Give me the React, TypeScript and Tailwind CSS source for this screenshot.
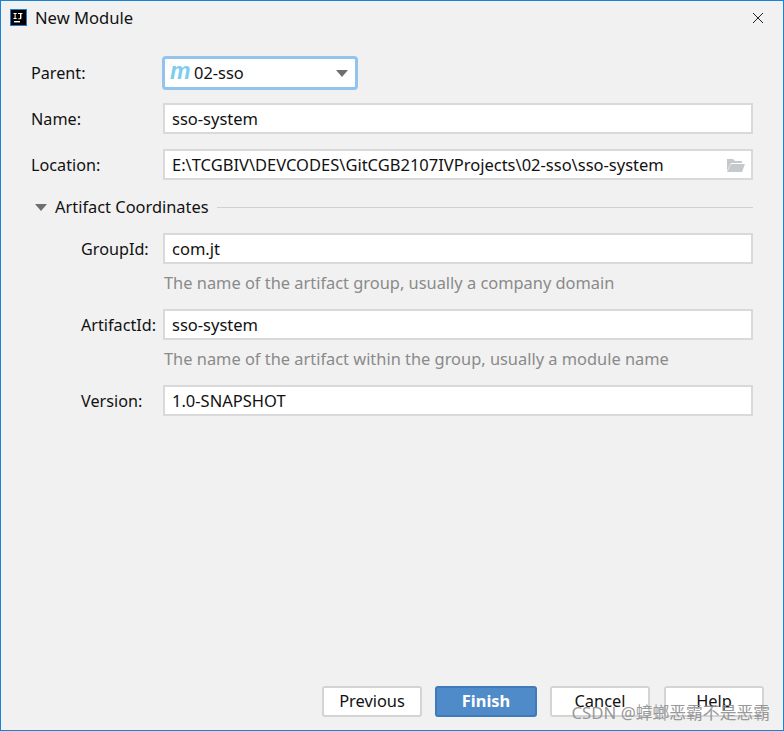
import React from "react";

const font = { fontFamily: '"Noto Sans", "Noto Sans CJK SC", sans-serif' };

function Field({ value, className = "", children }: { value: string; className?: string; children?: React.ReactNode }) {
  return (
    <div className={"flex h-[31px] flex-1 items-center justify-between border-2 border-[#d9d9d9] bg-white pl-[7px] pr-[5px] pt-[1px] text-[16.5px] text-[#111] " + className}>
      <span>{value}</span>
      {children}
    </div>
  );
}

function Row({ label, labelClass, children, className = "" }: { label: string; labelClass: string; children: React.ReactNode; className?: string }) {
  return (
    <div className={"flex items-center " + className}>
      <div className={"shrink-0 pt-[1px] text-[16.2px] text-[#111] " + labelClass}>{label}</div>
      {children}
    </div>
  );
}

function Btn({ children, primary, className = "" }: { children: React.ReactNode; primary?: boolean; className?: string }) {
  return (
    <div
      className={
        "flex h-[31px] items-center justify-center rounded-[3px] border-2 pb-[1px] text-[16.4px] " +
        (primary
          ? "border-[#4279b8] bg-[#4f8bc9] font-bold text-white "
          : "border-[#d4d4d4] bg-white text-[#111] ") +
        className
      }
    >
      {children}
    </div>
  );
}

export default function App() {
  return (
    <div style={font} className="relative flex h-[731px] w-[784px] flex-col overflow-hidden border border-[#1883d7] bg-[#f1f1f1]">
      <div className="flex h-[34px] shrink-0 items-center pl-[9px] pr-[19px]">
        <svg width="18" height="18" viewBox="0 0 18 18" className="shrink-0">
          <rect x="0.5" y="0.5" width="16" height="16" fill="#000" stroke="#1f78d1" />
          <rect x="4" y="12" width="6" height="1.4" fill="#fff" />
          <path d="M3.5 4h3.2v1H5.600v4h1.100v1H3.500V9h1.100V5H3.500zM8 4h4.400v1h-1v4.200c0 .6-.6 1-1.300 1H8.400V9.200h1.600V5H8z" fill="#fff" />
        </svg>
        <span className="ml-[7px] text-[16.6px] text-[#111]">New Module</span>
        <svg width="12" height="12" viewBox="0 0 12 12" className="ml-auto" fill="none" stroke="#222" strokeWidth="1">
          <path d="M1 1l10 10M11 1L1 11" />
        </svg>
      </div>

      <div className="flex flex-col pl-[30px] pr-[30px] pt-[21px]">
        <Row label="Parent:" labelClass="w-[131px]">
          <div className="flex h-[34px] w-[196px] items-center justify-between rounded-[4px] border-[3px] border-[#92c4ee] bg-white pl-[5px] pr-[7px] text-[16.4px] text-[#111]">
            <span className="flex items-center">
              <span className="mb-[3px] mr-[5px] w-[19px] text-[23px] font-bold italic leading-none text-[#7dcdec]" style={{ fontFamily: '"Liberation Sans", sans-serif' }}>m</span>
              02-sso
            </span>
            <svg width="12" height="7" viewBox="0 0 12 7"><path d="M0 0h12L6 7z" fill="#6e6e6e" /></svg>
          </div>
        </Row>
        <Row label="Name:" labelClass="w-[132px]" className="mt-[13px]">
          <Field value="sso-system" />
        </Row>
        <Row label="Location:" labelClass="w-[132px]" className="mt-[15px]">
          <Field value="E:\TCGBIV\DEVCODES\GitCGB2107IVProjects\02-sso\sso-system">
            <svg width="20" height="15" viewBox="0 0 20 15">
              <path d="M1 1h6l2 2h7v2H5L1 13z" fill="#c4c9cc" />
              <path d="M5 6h14l-3 8H1z" fill="#c4c9cc" />
            </svg>
          </Field>
        </Row>

        <div className="mt-[15px] flex h-[24px] items-center">
          <svg width="12" height="7" viewBox="0 0 12 7" className="ml-[4px] shrink-0"><path d="M0 0h12L6 7z" fill="#6e6e6e" /></svg>
          <span className="ml-[8px] text-[16.4px] leading-[24px] text-[#111]">Artifact Coordinates</span>
          <div className="ml-[8px] h-px flex-1 bg-[#d1d1d1]" />
        </div>

        <div className="flex flex-col pl-[50px]">
          <Row label="GroupId:" labelClass="w-[82px]" className="mt-[14px]">
            <Field value="com.jt" />
          </Row>
          <div className="ml-[83px] mt-[4px] text-[16.4px] leading-[30px] text-[#8a8a8a]">The name of the artifact group, usually a company domain</div>
          <Row label="ArtifactId:" labelClass="w-[82px]" className="mt-[11px]">
            <Field value="sso-system" />
          </Row>
          <div className="ml-[83px] mt-[4px] text-[16.4px] leading-[30px] text-[#8a8a8a]">The name of the artifact within the group, usually a module name</div>
          <Row label="Version:" labelClass="w-[82px]" className="mt-[11px]">
            <Field value="1.0-SNAPSHOT" />
          </Row>
        </div>
      </div>

      <div className="mt-auto mb-[13px] flex justify-end pr-[19px]">
        <Btn className="w-[100px]">Previous</Btn>
        <Btn primary className="ml-[13px] w-[102px]">Finish</Btn>
        <Btn className="ml-[13px] w-[100px]">Cancel</Btn>
        <Btn className="ml-[14px] w-[100px]">Help</Btn>
      </div>

      <div className="absolute bottom-[6px] right-[13px] text-[16.8px] leading-[22px] text-[#8f8f8f] opacity-90">CSDN @蟑螂恶霸不是恶霸</div>
    </div>
  );
}
